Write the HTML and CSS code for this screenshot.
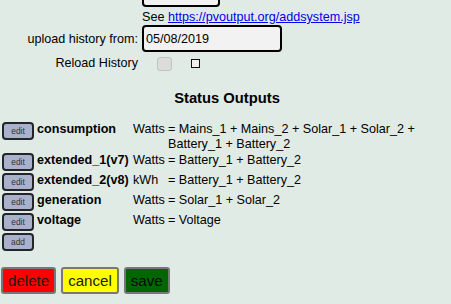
FILE: index.html
```html
<!DOCTYPE html>
<html>
<head>
<meta charset="utf-8">
<link rel="stylesheet" href="styles.css">
</head>
<body>
<div class="settings">
  <div class="lbl"></div>
  <div class="val"><input class="field field-short" type="text" value=""></div>
  <div class="lbl"></div>
  <div class="val see">See <a href="#">https://pvoutput.org/addsystem.jsp</a></div>
  <div class="lbl mid">upload history from:</div>
  <div class="val"><input class="field field-date" type="text" value="05/08/2019"></div>
  <div class="lbl mid reload">Reload History</div>
  <div class="val reload-val"><span class="check"></span><span class="mini"></span></div>
</div>

<h3 class="title">Status Outputs</h3>

<div class="outputs">
  <div class="cell"><button class="small-btn">edit</button></div>
  <div class="cell name">consumption</div>
  <div class="cell unit">Watts</div>
  <div class="cell expr">= Mains_1 + Mains_2 + Solar_1 + Solar_2 + Battery_1 + Battery_2</div>

  <div class="cell"><button class="small-btn">edit</button></div>
  <div class="cell name">extended_1(v7)</div>
  <div class="cell unit">Watts</div>
  <div class="cell expr">= Battery_1 + Battery_2</div>

  <div class="cell"><button class="small-btn">edit</button></div>
  <div class="cell name">extended_2(v8)</div>
  <div class="cell unit">kWh</div>
  <div class="cell expr">= Battery_1 + Battery_2</div>

  <div class="cell"><button class="small-btn">edit</button></div>
  <div class="cell name">generation</div>
  <div class="cell unit">Watts</div>
  <div class="cell expr">= Solar_1 + Solar_2</div>

  <div class="cell"><button class="small-btn">edit</button></div>
  <div class="cell name">voltage</div>
  <div class="cell unit">Watts</div>
  <div class="cell expr">= Voltage</div>

  <div class="cell"><button class="small-btn">add</button></div>
</div>

<div class="actions">
  <button class="big-btn btn-delete">delete</button>
  <button class="big-btn btn-cancel">cancel</button>
  <button class="big-btn btn-save">save</button>
</div>
</body>
</html>
```

FILE: styles.css
```css
html, body {
  margin: 0;
  padding: 0;
  background: #e0ebe5;
  font-family: "Liberation Sans", Arial, Helvetica, sans-serif;
  font-size: 12.6px;
  color: #000;
  overflow: hidden;
}

.settings {
  display: grid;
  grid-template-columns: 138px auto;
  column-gap: 4px;
  margin-top: -20px;
}

.lbl {
  text-align: right;
}

.mid {
  align-self: center;
}

.field {
  box-sizing: border-box;
  height: 27px;
  border: 2px solid #000;
  border-radius: 4px;
  background: #f2f2f2;
  font-family: "Liberation Sans", Arial, sans-serif;
  font-size: 12.6px;
  padding: 0 2px;
  margin: 0;
  display: block;
  color: #000;
}

.field-short {
  width: 78px;
}

.field-date {
  width: 140px;
}

.see {
  line-height: 14.5px;
  padding: 3px 0 0.5px 0;
}

.see a {
  color: #0000ee;
  text-decoration: underline;
}

.reload {
  height: 21px;
  line-height: 21px;
  padding-top: 1px;
}

.reload-val {
  display: flex;
  align-items: center;
  height: 21px;
  padding-top: 1px;
}

.check {
  box-sizing: border-box;
  width: 15px;
  height: 14px;
  margin-left: 15px;
  border: 1px solid #c2c2c2;
  border-radius: 3px;
  background: #dcdcdc;
}

.mini {
  box-sizing: border-box;
  width: 9px;
  height: 9px;
  margin-left: 19px;
  border: 1.5px solid #111;
  background: #f0f0f0;
}

.title {
  font-size: 14.75px;
  font-weight: bold;
  text-align: center;
  margin: 16px 0 0 0;
  line-height: 17px;
  padding-left: 3px;
}

.outputs {
  display: grid;
  grid-template-columns: 37px 96px 35px 278px;
  row-gap: 2px;
  margin-top: 15px;
}

.cell {
  line-height: 14.5px;
}

.name {
  font-weight: bold;
}

.small-btn {
  box-sizing: border-box;
  display: block;
  width: 32px;
  height: 18px;
  margin: 0 0 0 2px;
  padding: 0;
  border: 2px solid #23252b;
  border-radius: 4px;
  background: #a9b1cd;
  color: #333;
  font-family: "Liberation Sans", Arial, sans-serif;
  font-size: 8.4px;
}

.actions {
  display: flex;
  gap: 5px;
  margin: 16px 0 0 1px;
}

.big-btn {
  box-sizing: border-box;
  height: 27px;
  padding: 0 5px;
  border: 2px solid #777;
  border-radius: 3px;
  font-family: "Liberation Sans", Arial, sans-serif;
  font-size: 15.1px;
  color: #1a1a1a;
}

.btn-delete {
  background: #ff0000;
}

.btn-cancel {
  background: #ffff00;
}

.btn-save {
  background: #006600;
  color: #0a0a0a;
}
```
